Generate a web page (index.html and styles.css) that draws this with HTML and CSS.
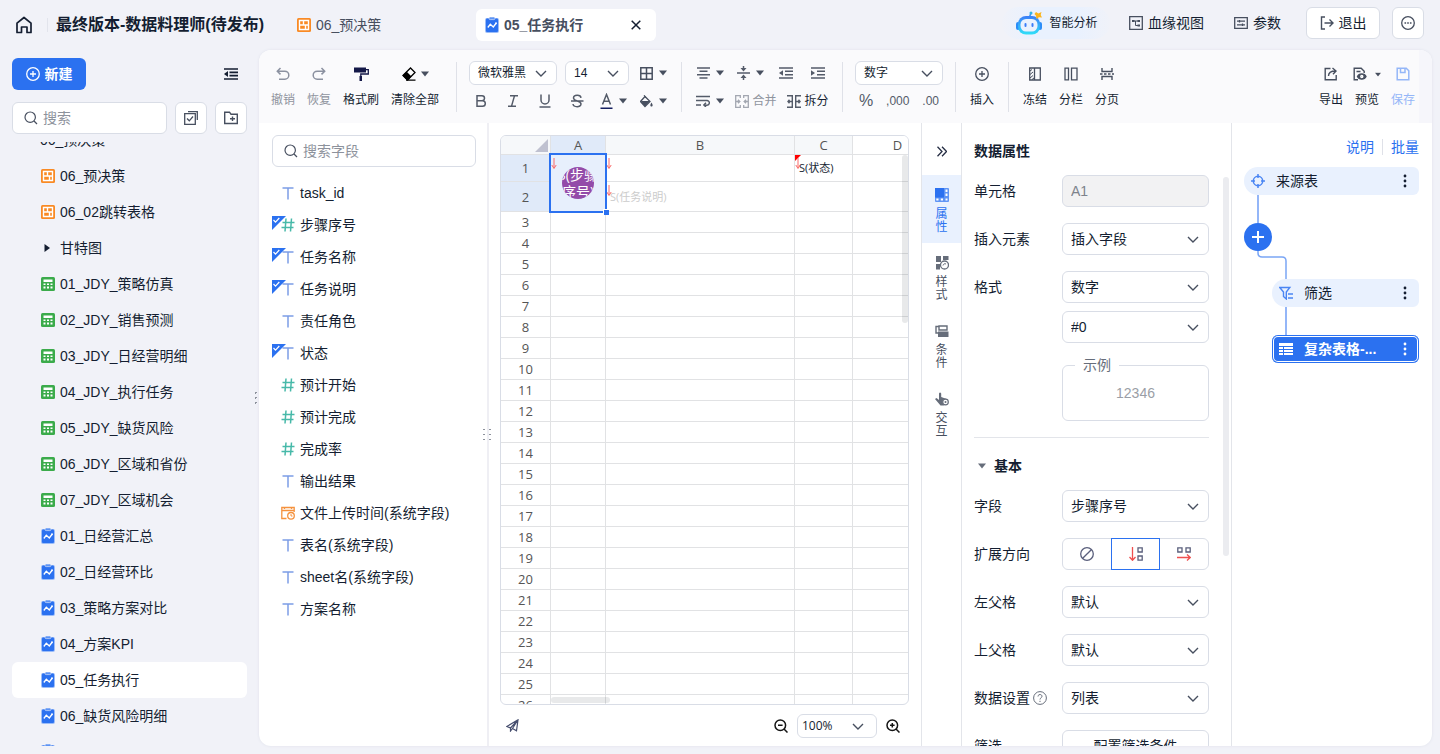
FILE: index.html
```html
<!DOCTYPE html>
<html lang="zh-CN">
<head>
    <meta charset="UTF-8">
    <meta name="viewport" content="width=device-width, initial-scale=1.0">
    <title>最终版本-数据料理师(待发布)</title>
    <link rel="stylesheet" href="styles.css">
</head>
<body>
    <!-- shared icons -->
    <svg class="sprite" aria-hidden="true">
        <symbol id="i-board" viewBox="0 0 14 14"><rect width="14" height="14" rx="1.500" fill="#f98a24"/><path d="M2.500 2.500h9v9h-9zM2.500 7h9M6.500 2.500V7M8.500 7v4.500" fill="none" stroke="#fff" stroke-width="1.400"/></symbol>
        <symbol id="i-table" viewBox="0 0 14 14"><rect width="14" height="14" rx="1.500" fill="#3bab4b"/><path d="M2.500 2.500h9v2.500h-9zM2.500 6.500h2v1.500h-2zM6 6.500h2v1.500H6zM9.500 6.500h2v1.500h-2zM2.500 9.500h2v2h-2zM6 9.500h2v2H6zM9.500 9.500h2v2h-2z" fill="#fff"/></symbol>
        <symbol id="i-report" viewBox="0 0 14 16"><rect y="1" width="14" height="15" rx="2" fill="#9cbdf8"/><rect x="1" y="1.500" width="12" height="13.500" rx="1" fill="#2b71f0"/><rect x="4" y="0" width="6" height="2.600" rx="1.200" fill="#5b93f5" stroke="#f1f2f8" stroke-width=".6"/><path d="M2.800 10.500l2.500-3.200 3 2.700 2.600-3.500" fill="none" stroke="#fff" stroke-width="1.300"/><circle cx="11" cy="6.300" r="1" fill="#fff"/></symbol>
        <symbol id="i-search" viewBox="0 0 14 14"><circle cx="6.200" cy="6.200" r="5.200" fill="none" stroke="#474f5f" stroke-width="1.200"/><path d="M10 10l3 3" stroke="#474f5f" stroke-width="1.300"/></symbol>
        <symbol id="i-chevron" viewBox="0 0 12 8"><path d="M1 1l5 5 5-5" fill="none" stroke="#474f5f" stroke-width="1.400"/></symbol>
        <symbol id="i-caret" viewBox="0 0 8 6"><path d="M0 .5h8L4 5.500z" fill="#474f5f"/></symbol>
        <symbol id="i-text" viewBox="0 0 14 14"><path d="M1.500 2h11M7 2v11.500" fill="none" stroke="#7c9de6" stroke-width="1.500"/></symbol>
        <symbol id="i-num" viewBox="0 0 14 14"><path d="M1.500 4.500h12M.5 9.500h12M5 .5l-1 13M10.500 .5l-1 13" fill="none" stroke="#47b9a9" stroke-width="1.500"/></symbol>
        <symbol id="i-date" viewBox="0 0 14 14"><path d="M5.500 12.500H.8V1.500h12.400V6M.8 4.500h12.400M3.500 1v2M10.500 1v2" fill="none" stroke="#f5923e" stroke-width="1.300"/><circle cx="10" cy="9.800" r="3.300" fill="none" stroke="#f5923e" stroke-width="1.300"/><path d="M10 8v2h1.500" fill="none" stroke="#f5923e"/></symbol>
        <symbol id="i-check" viewBox="0 0 14 14"><path d="M0 0h14L0 14z" fill="#2b71f0"/><path d="M1.500 4l2 2.200L7.300 2" fill="none" stroke="#fff" stroke-width="1.200"/></symbol>
        <symbol id="i-arrow" viewBox="0 0 6 12"><path d="M3 0v10M.8 7L3 10.500 5.200 7" fill="none" stroke="#f96a6a"/></symbol>
        <symbol id="i-dots" viewBox="0 0 4 14"><circle cx="2" cy="2" r="1.400" fill="currentColor"/><circle cx="2" cy="7" r="1.400" fill="currentColor"/><circle cx="2" cy="12" r="1.400" fill="currentColor"/></symbol>
    </svg>

    <header class="topbar">
        <a class="home" href="#" aria-label="首页"><svg width="18" height="18" viewBox="0 0 18 18"><path d="M2 7.200L9 1.500l7 5.700V16.500h-4V11H6.500v5.500H2z" fill="none" stroke="#141e31" stroke-width="1.700" stroke-linejoin="round"/></svg></a>
        <h1>最终版本-数据料理师(待发布)</h1>
        <nav class="tabs">
            <a class="tab" href="#"><svg width="14" height="14"><use href="#i-board"/></svg>06_预决策</a>
            <a class="tab active" href="#"><svg width="14" height="16"><use href="#i-report"/></svg>05_任务执行<svg class="close" width="10" height="10" viewBox="0 0 10 10"><path d="M.7.700l8.600 8.600M9.300.700L.7 9.300" stroke="#141e31" stroke-width="1.500"/></svg></a>
        </nav>
        <div class="top-actions">
            <button class="ai">
                <svg width="26" height="24" viewBox="0 0 26 24">
                    <defs><linearGradient id="bot" x1="0" y1="0" x2="0" y2="1"><stop offset="0" stop-color="#3b7df8"/><stop offset="1" stop-color="#2fe0f8"/></linearGradient></defs>
                    <path d="M13.500 6l1.500-4" stroke="#3b8df0" stroke-width="1.500"/><circle cx="15" cy="2" r="1.500" fill="#2fb4e8"/>
                    <rect x="0" y="11" width="4" height="8" rx="2" fill="#2b8df8"/><rect x="22" y="11" width="4" height="8" rx="2" fill="#2b8df8"/>
                    <rect x="2" y="5" width="22" height="18.500" rx="8" fill="url(#bot)"/><rect x="4.500" y="8" width="17" height="12.500" rx="5.500" fill="#eaf2fe"/>
                    <rect x="8.500" y="12" width="2" height="4" rx="1" fill="#3b7df8"/><rect x="15.500" y="12" width="2" height="4" rx="1" fill="#3b7df8"/>
                    <path d="M20 1l2.300 1.500L25.500 1l-.8 3 1.300 2.500-3-.2L20.500 8 20 4.800 18.500 3z" fill="#fbb51d"/>
                </svg>智能分析</button>
            <button class="plain"><svg width="14" height="14" viewBox="0 0 14 14" fill="none" stroke="#474f5f" stroke-width="1.300"><path d="M.7.700h12.600v12.600H.7z"/><path d="M5 5h4M6.500 5v4.500H9" stroke-width="1"/><path d="M3 4h2.500v2H3zM8.500 4H11v2H8.500zM8.500 8.500H11v2H8.500z" fill="#474f5f" stroke="none"/></svg>血缘视图</button>
            <button class="plain params"><svg width="14" height="12" viewBox="0 0 14 12" fill="none" stroke="#474f5f" stroke-width="1.300"><path d="M.7.700h12.600v10.600H.7zM3 4.200h8M3 7.800h8M5.500 3v2.500M8.500 6.500V9"/></svg>参数</button>
            <button class="box exit"><svg width="14" height="14" viewBox="0 0 14 14" fill="none" stroke="#474f5f" stroke-width="1.400"><path d="M5 1H1.500v12H5M4.500 7H13M9.500 3.500L13 7l-3.500 3.500"/></svg>退出</button>
            <button class="box square" aria-label="更多"><svg width="14" height="14" viewBox="0 0 14 14"><circle cx="7" cy="7" r="6.300" fill="none" stroke="#474f5f" stroke-width="1.300"/><path d="M3.500 7h1.600M6.200 7h1.600M8.900 7h1.600" stroke="#474f5f" stroke-width="1.600"/></svg></button>
        </div>
    </header>

    <aside class="sidebar">
        <div class="side-head">
            <button class="new"><svg width="14" height="14" viewBox="0 0 14 14" fill="none" stroke="#fff" stroke-width="1.300"><circle cx="7" cy="7" r="6.300"/><path d="M7 4v6M4 7h6"/></svg>新建</button>
            <button class="icon-btn" aria-label="收起"><svg width="14" height="12" viewBox="0 0 14 12" stroke="#141e31" stroke-width="1.700"><path d="M0 1h14M5.500 4.300H14M5.500 7.700H14M0 11h14"/><path d="M0 6l4-3v6z" fill="#141e31" stroke="none"/></svg></button>
        </div>
        <div class="side-search">
            <label class="search"><svg width="14" height="14"><use href="#i-search"/></svg><input type="text" placeholder="搜索" aria-label="搜索"></label>
            <button class="box square" aria-label="多选"><svg width="14" height="14" viewBox="0 0 14 14" fill="none" stroke="#474f5f" stroke-width="1.300"><path d="M.7 2.700h10.600v10.600H.7zM3 7.500l2.300 2.300L9 5.500M4 .7h9.300V9"/></svg></button>
            <button class="box square" aria-label="新建文件夹"><svg width="14" height="14" viewBox="0 0 14 14" fill="none" stroke="#474f5f" stroke-width="1.400"><path d="M.7 1.200h4.800l1.500 2h6.300v9.300H.7zM8.500 5.500v4.600M6 7.800h5"/></svg></button>
        </div>
        <div class="tree">
            <ul>
                <li class="folder top"><svg width="6" height="8" viewBox="0 0 6 8"><path d="M0 2h6L3 6z" fill="#141e31"/></svg>06_预决策</li>
                <li><svg width="14" height="14"><use href="#i-board"/></svg>06_预决策</li>
                <li><svg width="14" height="14"><use href="#i-board"/></svg>06_02跳转表格</li>
                <li class="folder"><svg width="6" height="8" viewBox="0 0 6 8"><path d="M.5 0v8L6 4z" fill="#141e31"/></svg>甘特图</li>
                <li><svg width="14" height="14"><use href="#i-table"/></svg>01_JDY_策略仿真</li>
                <li><svg width="14" height="14"><use href="#i-table"/></svg>02_JDY_销售预测</li>
                <li><svg width="14" height="14"><use href="#i-table"/></svg>03_JDY_日经营明细</li>
                <li><svg width="14" height="14"><use href="#i-table"/></svg>04_JDY_执行任务</li>
                <li><svg width="14" height="14"><use href="#i-table"/></svg>05_JDY_缺货风险</li>
                <li><svg width="14" height="14"><use href="#i-table"/></svg>06_JDY_区域和省份</li>
                <li><svg width="14" height="14"><use href="#i-table"/></svg>07_JDY_区域机会</li>
                <li><svg width="14" height="16"><use href="#i-report"/></svg>01_日经营汇总</li>
                <li><svg width="14" height="16"><use href="#i-report"/></svg>02_日经营环比</li>
                <li><svg width="14" height="16"><use href="#i-report"/></svg>03_策略方案对比</li>
                <li><svg width="14" height="16"><use href="#i-report"/></svg>04_方案KPI</li>
                <li class="selected"><svg width="14" height="16"><use href="#i-report"/></svg>05_任务执行</li>
                <li><svg width="14" height="16"><use href="#i-report"/></svg>06_缺货风险明细</li>
                <li><svg width="14" height="16"><use href="#i-report"/></svg></li>
            </ul>
        </div>
        <span class="grip side-grip"></span>
    </aside>

    <main class="workspace">
        <div class="toolbar">
            <div class="group first">
                <button class="tool muted"><svg width="14" height="14" viewBox="0 0 14 14" fill="none" stroke="#8b91a0" stroke-width="1.500"><path d="M4.500 1L1.300 4.200l3.200 3.200M1.500 4.200H8.800a4 4 0 0 1 0 8H3"/></svg>撤销</button>
                <button class="tool muted"><svg width="14" height="14" viewBox="0 0 14 14" fill="none" stroke="#8b91a0" stroke-width="1.500"><path d="M9.500 1l3.200 3.200-3.200 3.200M12.500 4.200H5.200a4 4 0 0 0 0 8H11"/></svg>恢复</button>
                <button class="tool wide"><svg width="15" height="14" viewBox="0 0 15 14"><path d="M0 .5h12v5H0z" fill="#141848"/><path d="M12 2.700h2.300V7H6.800v3" fill="none" stroke="#141848" stroke-width="1.300"/><path d="M5.500 9H8v5H5.500z" fill="#141848"/></svg>格式刷</button>
                <button class="tool widest"><span class="pair"><svg width="14" height="14" viewBox="0 0 14 14"><path d="M1 8.500L8.500 1 13 5.500 5.500 13z" fill="#fff" stroke="#000" stroke-width="1.300"/><path d="M0.500 8.500L4.500 4.500 9.500 9.500 6.500 12.700H4.500z"/><path d="M4 13.200h9.500" stroke="#000" stroke-width="1.300"/></svg><svg width="8" height="6"><use href="#i-caret"/></svg></span>清除全部</button>
            </div>
            <hr>
            <div class="group stack">
                <div class="line selects">
                    <span class="select small font"><select aria-label="字体"><option>微软雅黑</option></select><svg width="12" height="8"><use href="#i-chevron"/></svg></span>
                    <span class="select small size"><select aria-label="字号"><option>14</option></select><svg width="12" height="8"><use href="#i-chevron"/></svg></span>
                    <button class="mini caret" aria-label="边框"><svg width="13" height="13" viewBox="0 0 13 13" fill="none" stroke="#474f5f" stroke-width="1.500"><path d="M.8.800h11.400v11.400H.8zM6.500 1v11M1 6.500h11"/></svg><svg width="8" height="6"><use href="#i-caret"/></svg></button>
                </div>
                <div class="line">
                    <button class="mini" aria-label="加粗"><svg width="14" height="14" viewBox="0 0 14 14" fill="none" stroke="#545b69" stroke-width="1.500"><path d="M3 1.700h5a2.500 2.500 0 0 1 0 5H3zM3 6.700h5.500a2.800 2.800 0 0 1 0 5.600H3z"/></svg></button>
                    <button class="mini" aria-label="斜体"><svg width="14" height="14" viewBox="0 0 14 14" fill="none" stroke="#545b69" stroke-width="1.400"><path d="M4 1.700h8M2 12.300h8M8.500 1.700l-3 10.600"/></svg></button>
                    <button class="mini" aria-label="下划线"><svg width="14" height="14" viewBox="0 0 14 14" fill="none" stroke="#545b69" stroke-width="1.500"><path d="M3 .5v5.500a4 4 0 0 0 8 0V.5M1.500 13h11"/></svg></button>
                    <button class="mini" aria-label="删除线"><svg width="14" height="14" viewBox="0 0 14 14" fill="none" stroke="#545b69" stroke-width="1.500"><path d="M11 3.800C10.500 0 3.500.5 3.500 4c0 3.500 7.500 2.500 7.500 6 0 3.600-7.500 3.500-8 0M1 7h12.500"/></svg></button>
                    <button class="mini caret" aria-label="字体颜色"><svg width="13" height="16" viewBox="0 0 13 16" fill="none" stroke="#545b69" stroke-width="1.500"><path d="M2.500 11.500L6.500 1.500l4 10M4 8.300h5"/><path d="M.5 15.200h12" stroke="#141e60"/></svg><svg width="8" height="6"><use href="#i-caret"/></svg></button>
                    <button class="mini caret" aria-label="填充颜色"><svg width="13" height="13" viewBox="0 0 13 13"><path d="M5 1.500L10 6.500 5 11.500 .5 6.500z" fill="none" stroke="#474f5f" stroke-width="1.300"/><path d="M.8 6h9L5 11.500zM11.500 7.500c2 3 1 4 0 4s-2-1 0-4z" fill="#474f5f"/><path d="M4 0l2 3" stroke="#474f5f"/></svg><svg width="8" height="6"><use href="#i-caret"/></svg></button>
                </div>
            </div>
            <hr>
            <div class="group stack">
                <div class="line">
                    <button class="mini caret" aria-label="水平对齐"><svg width="13" height="12" viewBox="0 0 13 12" stroke="#545b69" stroke-width="1.400"><path d="M0 1h13M2.500 4.300h8M0 7.700h13M2.500 11h8"/></svg><svg width="8" height="6"><use href="#i-caret"/></svg></button>
                    <button class="mini caret" aria-label="垂直对齐"><svg width="13" height="14" viewBox="0 0 13 14" fill="none" stroke="#545b69" stroke-width="1.500"><path d="M0 7h13M6.500 0v4M6.500 10v4"/><path d="M3.500 2h6l-3 3.500zM3.500 12h6l-3-3.500z" fill="#545b69" stroke="none"/></svg><svg width="8" height="6"><use href="#i-caret"/></svg></button>
                    <button class="mini" aria-label="减少缩进"><svg width="14" height="12" viewBox="0 0 14 12" stroke="#545b69" stroke-width="1.400"><path d="M0 1h14M6 4.300h8M6 7.700h8M0 11h14"/><path d="M0 6l4-2.800v5.600z" fill="#545b69" stroke="none"/></svg></button>
                    <button class="mini" aria-label="增加缩进"><svg width="14" height="12" viewBox="0 0 14 12" stroke="#545b69" stroke-width="1.400"><path d="M0 1h14M6 4.300h8M6 7.700h8M0 11h14"/><path d="M4 6L0 3.200v5.600z" fill="#545b69" stroke="none"/></svg></button>
                </div>
                <div class="line">
                    <button class="mini caret" aria-label="自动换行"><svg width="14" height="12" viewBox="0 0 14 12" fill="none" stroke="#545b69" stroke-width="1.400"><path d="M0 1.500h14M0 5.500h11a2.300 2.300 0 0 1 0 4.700H8M0 10h5M10 7.800L7.800 10l2.200 2"/></svg><svg width="8" height="6"><use href="#i-caret"/></svg></button>
                    <button class="mini labelled muted"><svg width="14" height="13" viewBox="0 0 14 13" fill="none" stroke="#a3a7b1" stroke-width="1.300"><path d="M5.300 3V.7H.7v11.600h4.600V10M8.700 3V.7h4.600v11.600H8.700V10M1 6.500h3.500M13 6.500H9.500M3 4.800l1.800 1.700L3 8.200M11 4.800L9.200 6.500 11 8.200"/></svg>合并</button>
                    <button class="mini labelled"><svg width="14" height="13" viewBox="0 0 14 13" fill="none" stroke="#545b69" stroke-width="1.400"><path d="M0 .7h5.300v11.600H0M14 .7H8.700v11.600H14M5 6.500H1M9 6.500h4M2.500 4.800L1 6.500l1.500 1.700M11.500 4.800L13 6.500l-1.500 1.700"/></svg>拆分</button>
                </div>
            </div>
            <hr>
            <div class="group stack number">
                <div class="line">
                    <span class="select small format"><select aria-label="数字格式"><option>数字</option></select><svg width="12" height="8"><use href="#i-chevron"/></svg></span>
                </div>
                <div class="line digits">
                    <button>%</button>
                    <button class="narrow">,000</button>
                    <button class="narrow">.00</button>
                </div>
            </div>
            <hr>
            <div class="group">
                <button class="tool"><svg width="14" height="14" viewBox="0 0 14 14" fill="none" stroke="#474f5f" stroke-width="1.300"><circle cx="7" cy="7" r="6.300"/><path d="M7 4v6M4 7h6"/></svg>插入</button>
            </div>
            <hr>
            <div class="group">
                <button class="tool"><svg width="12" height="14" viewBox="0 0 12 14" fill="none" stroke="#474f5f" stroke-width="1.300"><path d="M.7 1h10.600v12H.7zM5.500 1v12"/><path d="M1 4l2-1.500M1 7.500l3-2.500M1 11l3-2.500M3 12.500L5 11" stroke-width="1"/></svg>冻结</button>
                <button class="tool"><svg width="14" height="14" viewBox="0 0 14 14" fill="none" stroke="#474f5f" stroke-width="1.300"><path d="M1 1.200h3.500v11.600H1zM7.500 1.200H13v11.600H7.500z"/></svg>分栏</button>
                <button class="tool"><svg width="14" height="14" viewBox="0 0 14 14" fill="none" stroke="#474f5f" stroke-width="1.400"><path d="M2 1v3.500h10V1M2 13V9.500h10V13M0 7h2.500M4 7h2.500M8 7h2.500M12 7h2"/></svg>分页</button>
            </div>
            <div class="group end">
                <button class="tool"><svg width="14" height="14" viewBox="0 0 14 14" fill="none" stroke="#474f5f" stroke-width="1.400"><path d="M6.500 1.500H1.200v11.300h11V8M4.500 9c0-3 2-5 7-5M8.500 1L12 4 9 7.200"/></svg>导出</button>
                <button class="tool"><span class="pair view"><svg width="14" height="14" viewBox="0 0 14 14" fill="none" stroke="#474f5f" stroke-width="1.400"><path d="M5 12.800H1.200V1.200h7l3 3V6M3.500 4.500h4"/><path d="M4.500 9.500C6 6 11.500 6 13 9.500c-1.500 3.500-7 3.500-8.500 0z" fill="#474f5f"/><circle cx="8.800" cy="9.500" r="1" stroke="#fff"/></svg><svg width="6" height="5" viewBox="0 0 8 6"><use href="#i-caret"/></svg></span>预览</button>
                <button class="tool save"><svg width="14" height="14" viewBox="0 0 14 14" fill="none" stroke="#94b6f8" stroke-width="1.500"><path d="M1.200 1.200h9l2.600 2.600v9H1.200zM4.500 1.500v4h4.500v-4"/></svg>保存</button>
            </div>
        </div>

        <div class="panes">
            <section class="fields">
                <label class="search"><svg width="14" height="14"><use href="#i-search"/></svg><input type="text" placeholder="搜索字段" aria-label="搜索字段"></label>
                <ul>
                    <li><svg width="14" height="14"><use href="#i-text"/></svg>task_id</li>
                    <li><svg class="mark" width="14" height="14"><use href="#i-check"/></svg><svg width="14" height="14"><use href="#i-num"/></svg>步骤序号</li>
                    <li><svg class="mark" width="14" height="14"><use href="#i-check"/></svg><svg width="14" height="14"><use href="#i-text"/></svg>任务名称</li>
                    <li><svg class="mark" width="14" height="14"><use href="#i-check"/></svg><svg width="14" height="14"><use href="#i-text"/></svg>任务说明</li>
                    <li><svg width="14" height="14"><use href="#i-text"/></svg>责任角色</li>
                    <li><svg class="mark" width="14" height="14"><use href="#i-check"/></svg><svg width="14" height="14"><use href="#i-text"/></svg>状态</li>
                    <li><svg width="14" height="14"><use href="#i-num"/></svg>预计开始</li>
                    <li><svg width="14" height="14"><use href="#i-num"/></svg>预计完成</li>
                    <li><svg width="14" height="14"><use href="#i-num"/></svg>完成率</li>
                    <li><svg width="14" height="14"><use href="#i-text"/></svg>输出结果</li>
                    <li><svg width="14" height="14"><use href="#i-date"/></svg>文件上传时间(系统字段)</li>
                    <li><svg width="14" height="14"><use href="#i-text"/></svg>表名(系统字段)</li>
                    <li><svg width="14" height="14"><use href="#i-text"/></svg>sheet名(系统字段)</li>
                    <li><svg width="14" height="14"><use href="#i-text"/></svg>方案名称</li>
                </ul>
                <span class="grip"></span>
            </section>

            <section class="sheet">
                <div class="grid-wrap">
                    <table>
                        <colgroup><col class="c-head"><col class="c-a"><col class="c-b"><col class="c-c"><col class="c-d"></colgroup>
                        <thead>
                            <tr><th class="corner"><svg width="13" height="13" viewBox="0 0 13 13"><path d="M13 0v13H0z" fill="#bfc1d0"/></svg></th><th class="on">A</th><th>B</th><th>C</th><th class="blank">D</th></tr>
                        </thead>
                        <tbody id="rows">
                            <tr class="r1">
                                <th class="on">1</th>
                                <td class="cursor" rowspan="2"><svg class="dir" width="6" height="12"><use href="#i-arrow"/></svg><span class="dot"><span>S(步骤<br>序号)</span></span></td>
                                <td><svg class="dir" width="6" height="12"><use href="#i-arrow"/></svg></td>
                                <td class="note"><svg class="dir" width="6" height="12"><use href="#i-arrow"/></svg>S(状态)</td>
                                <td></td>
                            </tr>
                            <tr class="r2">
                                <th class="on">2</th>
                                <td class="faint"><svg class="dir" width="6" height="12"><use href="#i-arrow"/></svg>S(任务说明)</td>
                                <td></td>
                                <td></td>
                            </tr>
                        </tbody>
                    </table>
                    <span class="bar-y"></span>
                    <span class="bar-x"></span>
                </div>
                <div class="sheet-foot">
                    <button class="icon-btn" aria-label="发送"><svg width="13" height="13" viewBox="0 0 13 13" fill="none" stroke="#474f6f" stroke-width="1.200"><path d="M.8 7.500L12 .8l-1.500 11-4-2.300-2 2.500V9zM4.500 9L12 .8 6.500 9.500"/></svg></button>
                    <div class="zoom">
                        <button class="icon-btn" aria-label="缩小"><svg width="14" height="14" viewBox="0 0 14 14" fill="none" stroke="#141414" stroke-width="1.500"><circle cx="6.300" cy="6.300" r="5.300"/><path d="M10 10l3.500 3.500M4 6.300h4.600"/></svg></button>
                        <span class="select small"><select aria-label="缩放"><option>100%</option></select><svg width="12" height="8"><use href="#i-chevron"/></svg></span>
                        <button class="icon-btn" aria-label="放大"><svg width="14" height="14" viewBox="0 0 14 14" fill="none" stroke="#141414" stroke-width="1.500"><circle cx="6.300" cy="6.300" r="5.300"/><path d="M10 10l3.500 3.500M4 6.300h4.600M6.300 4v4.600"/></svg></button>
                    </div>
                </div>
            </section>

            <nav class="rail">
                <button class="fold" aria-label="收起面板"><svg width="10" height="11" viewBox="0 0 10 11" fill="none" stroke="#272f45" stroke-width="1.300"><path d="M.5.800l4.500 4.700L.5 10.200M5 .8l4.500 4.700L5 10.200"/></svg></button>
                <button class="current"><svg width="14" height="14" viewBox="0 0 14 14"><rect width="14" height="14" rx="1" fill="#5f95f5"/><path d="M0 0h9v9.500H0z" fill="#2b71f0"/><path d="M10.500 1.500h2V4h-2zM10.500 5.500h2V8h-2zM10.500 10.500h2v2h-2zM5.800 10.500H8v2H5.800zM1.300 10.500h2.200v2H1.300z" fill="#fff"/></svg><span>属性</span></button>
                <button><svg width="14" height="14" viewBox="0 0 14 14" fill="#666d7a"><path d="M1 0h5v6H1zM8 0h5.500v4H8zM1 8h4v5.500H1z"/><circle cx="9.500" cy="9" r="4" fill="#fff" stroke="#666d7a" stroke-width="1.300"/><path d="M8 9.500a2 2 0 0 1 3-1.500" fill="none" stroke="#666d7a"/></svg><span>样式</span></button>
                <button><svg width="14" height="14" viewBox="0 0 14 14"><path d="M4 2h8v4H4zM3.500 2.500H1V9h2" fill="none" stroke="#666d7a" stroke-width="1.400"/><path d="M3 7.500h10.500V13H3z" fill="#666d7a"/></svg><span>条件</span></button>
                <button><svg width="14" height="14" viewBox="0 0 14 14"><path d="M4 1.500q1-2 2.200 0V5l5.500 2v5l-3 1.500H5.500L0 7l1.500-1L4 8z" fill="#666d7a"/><circle cx="10.500" cy="10" r="2.800" fill="#fff" stroke="#666d7a" stroke-width="1.200"/><circle cx="10.500" cy="10" r="1" fill="#666d7a"/></svg><span>交互</span></button>
            </nav>

            <section class="props">
                <h2>数据属性</h2>
                <div class="props-body">
                    <div class="row"><label for="cell">单元格</label><input id="cell" type="text" value="A1" disabled></div>
                    <div class="row"><label for="insert">插入元素</label><span class="select"><select id="insert"><option>插入字段</option></select><svg width="12" height="8"><use href="#i-chevron"/></svg></span></div>
                    <div class="row tight"><label for="fmt">格式</label><span class="select"><select id="fmt"><option>数字</option></select><svg width="12" height="8"><use href="#i-chevron"/></svg></span></div>
                    <div class="row"><span></span><span class="select"><select aria-label="数字样式"><option>#0</option></select><svg width="12" height="8"><use href="#i-chevron"/></svg></span></div>
                    <div class="row"><span></span><fieldset><legend>示例</legend>12346</fieldset></div>
                    <h3><svg width="8" height="6" viewBox="0 0 8 6"><path d="M0 .5h8L4 5.500z" fill="#666d7a"/></svg>基本</h3>
                    <div class="row"><label for="field">字段</label><span class="select"><select id="field"><option>步骤序号</option></select><svg width="12" height="8"><use href="#i-chevron"/></svg></span></div>
                    <div class="row"><span>扩展方向</span>
                        <div class="segment">
                            <button aria-label="不扩展"><svg width="14" height="14" viewBox="0 0 14 14" fill="none" stroke="#5a5f7c" stroke-width="1.300"><circle cx="7" cy="7" r="6.300"/><path d="M2.700 11.300l8.600-8.600"/></svg></button>
                            <button class="picked" aria-label="向下扩展"><svg width="14" height="14" viewBox="0 0 14 14" fill="none" stroke-width="1.300"><path d="M3.500 0v13M.5 10l3 3.300 3-3.300" stroke="#ef4f4f"/><path d="M9 .8h4.200V5H9zM9 9h4.200v4.200H9z" stroke="#5a5f7c"/></svg></button>
                            <button aria-label="向右扩展"><svg width="14" height="14" viewBox="0 0 14 14" fill="none" stroke-width="1.300"><path d="M0 10.500h13M10 7.500l3.300 3-3.300 3" stroke="#ef4f4f"/><path d="M.8.800H5V5H.8zM9 .8h4.200V5H9z" stroke="#5a5f7c"/></svg></button>
                        </div>
                    </div>
                    <div class="row"><label for="left">左父格</label><span class="select"><select id="left"><option>默认</option></select><svg width="12" height="8"><use href="#i-chevron"/></svg></span></div>
                    <div class="row"><label for="up">上父格</label><span class="select"><select id="up"><option>默认</option></select><svg width="12" height="8"><use href="#i-chevron"/></svg></span></div>
                    <div class="row"><label for="set">数据设置<svg width="14" height="14" viewBox="0 0 14 14" fill="none" stroke="#666d7a"><circle cx="7" cy="7" r="6.400"/><path d="M5 5.500c0-2.700 4-2.500 4-.2 0 1.500-2 1.500-2 3.200M7 9.800v1.200"/></svg></label><span class="select"><select id="set"><option>列表</option></select><svg width="12" height="8"><use href="#i-chevron"/></svg></span></div>
                    <div class="row"><span>筛选</span><button class="box">配置筛选条件</button></div>
                </div>
                <span class="bar-y"></span>
            </section>

            <section class="flow">
                <div class="links"><a href="#">说明</a><a href="#">批量</a></div>
                <div class="node"><svg width="14" height="14" viewBox="0 0 14 14" fill="none" stroke="#4a85f3" stroke-width="1.500"><circle cx="7" cy="7" r="4.700"/><path d="M7 0v4M7 10v4M0 7h4M10 7h4"/></svg><span>来源表</span><svg width="4" height="14"><use href="#i-dots"/></svg></div>
                <i class="wire"></i>
                <button class="add" aria-label="添加步骤"><svg width="12" height="12" viewBox="0 0 12 12"><path d="M6 0v12M0 6h12" stroke="#fff" stroke-width="2"/></svg></button>
                <svg class="bend" width="30" height="28" viewBox="0 0 30 28" fill="none" stroke="#7ba6f5" stroke-width="1.500"><path d="M1 0v2q0 4 4 4h20q4 0 4 4v18"/></svg>
                <div class="branch">
                    <div class="node"><svg width="14" height="14" viewBox="0 0 14 14" fill="none" stroke="#4a85f3" stroke-width="1.400"><path d="M.8 1.500h10L7.300 6v7L4.500 10.500V6zM9 8h5M9 12h5"/></svg><span>筛选</span><svg width="4" height="14"><use href="#i-dots"/></svg></div>
                    <i class="wire"></i>
                    <div class="node chosen"><svg width="14" height="12" viewBox="0 0 14 12"><path d="M0 0h14v3H0zM0 4h4v2H0zM5 4h9v2H5zM0 7h4v2H0zM5 7h9v2H5zM0 10h4v2H0zM5 10h9v2H5z" fill="#fff"/></svg><span>复杂表格-...</span><svg width="4" height="14"><use href="#i-dots"/></svg></div>
                </div>
            </section>
        </div>
    </main>

<script>
    // fill the empty rows under the two used ones
    const rows = document.getElementById('rows');
    for (let i = 3; i <= 28; i++) {
        const tr = document.createElement('tr');
        tr.innerHTML = `<th>${i}</th><td></td><td></td><td></td><td></td>`;
        rows.appendChild(tr);
    }
</script>
</body>
</html>
```
FILE: styles.css
```css
* {
    box-sizing: border-box;
}

body {
    margin: 0;
    height: 100vh;
    display: grid;
    grid-template-columns: 259px 1fr;
    grid-template-rows: 50px 1fr;
    padding: 0 8px 8px 0;
    overflow: hidden;
    background: #f1f2f8;
    color: #141e31;
    font: 14px/20px "Liberation Sans", "Noto Sans CJK SC", sans-serif;
}

ul {
    list-style: none;
    margin: 0;
    padding: 0;
}

button, input, select {
    font: inherit;
    color: inherit;
}

button {
    display: flex;
    align-items: center;
    justify-content: center;
    padding: 0;
    border: 0;
    background: none;
    cursor: pointer;
}

a {
    color: inherit;
    text-decoration: none;
}

svg {
    flex: none;
    display: block;
}

.sprite {
    position: absolute;
    width: 0;
    height: 0;
}

/* top bar */
.topbar {
    grid-column: 1 / 3;
    display: flex;
    align-items: center;
    padding-left: 15px;
    min-width: 0;
}

.home {
    padding-right: 14px;
}

.topbar h1 {
    margin: 0;
    padding-left: 8px;
    border-left: 1px solid #e2e4ec;
    font-size: 16px;
    line-height: 14px;
    font-weight: 700;
    white-space: nowrap;
}

.tabs {
    display: flex;
    gap: 8px;
    margin-left: 24px;
}

.tab {
    display: flex;
    align-items: center;
    gap: 5px;
    width: 180px;
    height: 32px;
    padding: 0 15px 0 9px;
    border-radius: 6px;
    color: #474f5f;
}

.tab.active {
    background: #fff;
    font-weight: 700;
}

.tab .close {
    margin-left: auto;
}

.top-actions {
    display: flex;
    align-items: center;
    margin: 0 0 4px auto;
    white-space: nowrap;
}

.ai {
    width: 108px;
    height: 32px;
    gap: 7px;
    padding-left: 2px;
    border-radius: 16px;
    background: linear-gradient(to right, #f0f2f9, #e9f1fe 30%, #e9f1fe 70%, #f0f2f9);
    font-size: 12px;
}

.plain {
    gap: 5px;
    margin-left: 19px;
}

.plain.params {
    margin-left: 30px;
}

.box {
    border: 1px solid #d9dde6;
    border-radius: 6px;
    background: #fff;
    height: 32px;
}

.exit {
    width: 74px;
    gap: 5px;
    margin-left: 25px;
}

.square {
    width: 32px;
}

.exit + .square {
    margin: 0 8px 0 12px;
}

/* sidebar */
.sidebar {
    position: relative;
    display: flex;
    flex-direction: column;
    min-height: 0;
    padding: 8px 12px 0;
}

.side-head {
    display: flex;
    justify-content: space-between;
    align-items: center;
    padding-right: 9px;
}

.new {
    width: 74px;
    height: 32px;
    gap: 5px;
    border-radius: 6px;
    background: #2b71f0;
    color: #fff;
    font-weight: 700;
}

.side-search {
    display: flex;
    gap: 8px;
    margin: 12px 0 8px;
}

.search {
    display: flex;
    align-items: center;
    gap: 5px;
    flex: 1;
    min-width: 0;
    height: 32px;
    padding: 0 11px;
    border: 1px solid #d9dde6;
    border-radius: 6px;
    background: #fff;
}

.search input {
    width: 100%;
    padding: 0;
    border: 0;
    outline: 0;
    background: none;
}

.search input::placeholder {
    color: #8d929c;
}

.tree {
    flex: 1;
    min-height: 0;
    overflow: hidden;
}

/* list is scrolled a little */
.tree ul {
    margin-top: -20px;
}

.tree li {
    display: flex;
    align-items: center;
    gap: 5px;
    height: 36px;
    padding-left: 29px;
    border-radius: 6px;
    white-space: nowrap;
}

.tree .folder {
    gap: 10px;
    padding-left: 32px;
}

.tree .folder.top {
    gap: 8px;
    padding-left: 14px;
}

.tree .selected {
    background: #fff;
}

/* drag handles */
.grip {
    position: absolute;
    z-index: 2;
    right: -6px;
    top: 50%;
    width: 12px;
    height: 15px;
    margin-top: -8px;
    background: radial-gradient(circle, #8d929c 1px, transparent 1px) 0 0 / 6px 5px;
}

.side-grip {
    right: 1px;
    width: 5px;
    background-size: 5px 5px;
}

/* workspace */
.workspace {
    display: flex;
    flex-direction: column;
    min-width: 0;
    min-height: 0;
    overflow: hidden;
    border-radius: 12px;
    background: #fff;
    box-shadow: 0 0 3px #dfe1ea;
}

.toolbar {
    display: flex;
    align-items: flex-start;
    gap: 8px;
    height: 73px;
    padding: 11px 11px 0 6px;
    background: linear-gradient(to left, #f6f6fb 13px, #fafafc 13px);
    font-size: 12px;
    white-space: nowrap;
}

.toolbar hr {
    width: 1px;
    height: 50px;
    margin: 1px 0 0;
    border: 0;
    background: #dfe1e8;
}

.group {
    display: flex;
}

.group.first {
    padding-right: 3px;
}

.group.end {
    margin-left: auto;
}

.tool {
    flex-direction: column;
    justify-content: flex-start;
    gap: 10px;
    width: 36px;
    padding-top: 6px;
    line-height: 18px;
}

.tool.wide {
    width: 48px;
}

.tool.widest {
    width: 60px;
}

.tool.save {
    color: #94b6f8;
}

.muted {
    color: #8f949e;
}

.pair {
    display: flex;
    align-items: center;
    gap: 5px;
}

.pair.view {
    gap: 8px;
}

.stack {
    flex-direction: column;
    gap: 4px;
}

.line {
    display: flex;
    height: 24px;
}

.selects {
    padding-left: 4px;
}

.mini {
    width: 32px;
}

.mini.caret {
    width: 40px;
    gap: 6px;
}

.mini.labelled {
    width: 52px;
    gap: 3px;
}

.number {
    padding: 0 4px;
}

.digits {
    justify-content: space-between;
    padding: 0 4px;
}

.digits button {
    color: #545b69;
    font-size: 16px;
}

.digits .narrow {
    font-size: 12px;
}

.select {
    position: relative;
    display: block;
}

.select select {
    appearance: none;
    width: 100%;
    height: 32px;
    padding: 0 28px 0 8px;
    border: 1px solid #d9dde6;
    border-radius: 6px;
    background: #fff;
}

.select svg {
    position: absolute;
    right: 10px;
    top: 50%;
    margin-top: -3px;
    pointer-events: none;
}

.select.small select {
    height: 24px;
    padding-right: 0;
    font-size: 12px;
}

.font {
    width: 88px;
    margin-right: 8px;
}

.size {
    width: 64px;
    margin-right: 4px;
}

.format {
    width: 88px;
}

.panes {
    display: grid;
    grid-template-columns: 230px 1fr 41px 269px 201px;
    grid-template-rows: 100%;
    flex: 1;
    min-height: 0;
}

/* field list */
.fields {
    position: relative;
    padding: 12px 11px 0 13px;
    border-right: 2px solid #efeff4;
}

.fields ul {
    padding-top: 10px;
}

.fields li {
    position: relative;
    display: flex;
    align-items: center;
    gap: 5px;
    height: 32px;
    padding-left: 9px;
    white-space: nowrap;
}

.fields .mark {
    position: absolute;
    left: 0;
    top: 7px;
}

/* spreadsheet */
.sheet {
    display: flex;
    flex-direction: column;
    min-width: 0;
    min-height: 0;
    padding: 12px 12px 0 11px;
}

.grid-wrap {
    position: relative;
    flex: 1;
    min-height: 0;
    overflow: hidden;
    border: 1px solid #d9dde6;
    border-radius: 6px;
}

table {
    width: 442px;
    table-layout: fixed;
    border-collapse: separate;
    border-spacing: 0;
    font: 11px/14px "Open Sans", "Noto Sans CJK SC", sans-serif;
}

.c-head { width: 50px; }
.c-a { width: 55px; }
.c-b { width: 189px; }
.c-c { width: 58px; }
.c-d { width: 90px; }

th, td {
    position: relative;
    height: 21px;
    padding: 0 0 0 4px;
    border: solid #e1e2e4;
    border-width: 0 1px 1px 0;
}

th {
    padding: 0;
    color: #555;
    font-size: 13px;
    font-weight: 400;
}

thead th {
    height: 19px;
    background: #f6f8fa;
}

thead .blank {
    background: #fff;
}

thead .on, tbody .on {
    background: #e0eaf9;
}

.corner svg {
    margin: 0 2px 0 auto;
}

.r1 th, .r1 td {
    height: 27px;
}

.r2 th, .r2 td {
    height: 30px;
}

.faint {
    color: #ccc;
}

.dir {
    position: absolute;
    z-index: 1;
    left: 0;
    top: 3px;
}

.note::before {
    content: "";
    position: absolute;
    left: 0;
    top: 0;
    border-top: 6px solid #f00;
    border-right: 6px solid transparent;
}

td.cursor {
    padding: 0;
    background: #e7effc;
}

/* selection frame with its fill handle */
.cursor::before {
    content: "";
    position: absolute;
    z-index: 2;
    inset: -2px;
    border: 2px solid #2b71f0;
}

.cursor::after {
    content: "";
    position: absolute;
    z-index: 2;
    right: -4px;
    bottom: -4px;
    width: 5px;
    height: 5px;
    border: solid #fff;
    border-width: 1px 0 0 1px;
    background: #2b71f0;
}

.dot {
    display: flex;
    align-items: center;
    justify-content: center;
    width: 32px;
    height: 32px;
    margin: 0 auto;
    overflow: hidden;
    border-radius: 50%;
    background: #934ba9;
    color: #fff;
    font-size: 14px;
    line-height: 17px;
    text-align: center;
    white-space: nowrap;
}

.bar-y, .bar-x {
    position: absolute;
    border-radius: 3px;
    background: rgba(30, 35, 50, .1);
}

.grid-wrap .bar-y {
    right: 0;
    top: 19px;
    width: 6px;
    height: 168px;
}

.bar-x {
    left: 50px;
    bottom: 1px;
    width: 59px;
    height: 6px;
}

.sheet-foot {
    display: flex;
    align-items: center;
    justify-content: space-between;
    height: 41px;
    padding: 0 9px 0 6px;
}

.zoom {
    display: flex;
    align-items: center;
    gap: 9px;
}

.zoom .select {
    width: 80px;
}

.zoom .select select {
    padding-left: 4px;
    font-family: "Open Sans", sans-serif;
}

.zoom .select svg {
    right: 13px;
}

/* vertical tabs */
.rail {
    border: solid #e3e5ea;
    border-width: 0 1px;
}

.rail button {
    flex-direction: column;
    gap: 6px;
    width: 100%;
    height: 68px;
    padding-top: 4px;
    color: #474f5f;
    font-size: 12px;
    line-height: 13px;
}

.rail .fold {
    height: 52px;
}

.rail span {
    width: 12px;
}

.rail .current {
    background: #e9f1fe;
    color: #2b71f0;
}

/* properties */
.props {
    position: relative;
    display: flex;
    flex-direction: column;
    min-height: 0;
}

.props h2 {
    margin: 0;
    padding: 18px 12px 14px;
    font-size: 14px;
    line-height: 20px;
}

.props-body {
    flex: 1;
    min-height: 0;
    overflow: hidden;
    padding: 0 22px 0 12px;
}

.row {
    display: grid;
    grid-template-columns: 88px 1fr;
    align-items: center;
    margin-bottom: 16px;
    white-space: nowrap;
}

.row.tight {
    margin-bottom: 8px;
}

.row label {
    display: flex;
    align-items: center;
    gap: 3px;
}

.row input {
    width: 100%;
    height: 32px;
    padding: 0 8px;
    border: 1px solid #d9dde6;
    border-radius: 6px;
    background: #f2f2f3;
    color: #7d828c;
}

fieldset {
    min-width: 0;
    height: 66px;
    margin: -4px 0 0;
    padding: 8px 0 0;
    border: 1px solid #d9dde6;
    border-radius: 6px;
    color: #9a9ea6;
    text-align: center;
}

legend {
    margin: 0 auto 0 12px;
    padding: 0 8px;
    color: #666d7a;
}

h3 {
    display: flex;
    align-items: center;
    gap: 8px;
    margin: 0;
    padding: 18px 4px 14px;
    border-top: 1px solid #e3e5ea;
    font-size: 14px;
    line-height: 20px;
}

.segment {
    display: flex;
    height: 32px;
    border: 1px solid #d9dde6;
    border-radius: 6px;
}

.segment button {
    flex: 1;
}

.segment .picked {
    margin: -1px 0;
    border: 1px solid #2b71f0;
}

.props .bar-y {
    right: 2px;
    top: 54px;
    width: 6px;
    height: 379px;
    background: #ebecf0;
}

/* step flow */
.flow {
    padding: 14px 13px 0 12px;
    border-left: 1px solid #e3e5ea;
}

.links {
    display: flex;
    justify-content: flex-end;
    align-items: center;
    margin-bottom: 10px;
    color: #2b71f0;
}

.links a {
    line-height: 16px;
    margin: 2px 0;
}

.links a + a {
    margin-left: 8px;
    padding-left: 8px;
    border-left: 1px solid #dfe1e8;
}

.node {
    display: flex;
    align-items: center;
    height: 28px;
    padding: 0 12px 0 7px;
    border-radius: 14px 6px 6px 14px;
    background: #e9f1fe;
    white-space: nowrap;
}

.node span {
    flex: 1;
    padding-left: 11px;
}

.wire {
    display: block;
    width: 2px;
    height: 28px;
    margin-left: 13px;
    background: #94b6f8;
}

.add {
    width: 28px;
    height: 28px;
    border-radius: 50%;
    background: #2b71f0;
}

.bend {
    margin-left: 13px;
}

.branch {
    margin-left: 28px;
}

.node.chosen {
    border-radius: 6px;
    background: #2b71f0;
    box-shadow: inset 0 0 0 1px #2b71f0, inset 0 0 0 2px #fff;
    color: #fff;
    font-weight: 700;
}
```
